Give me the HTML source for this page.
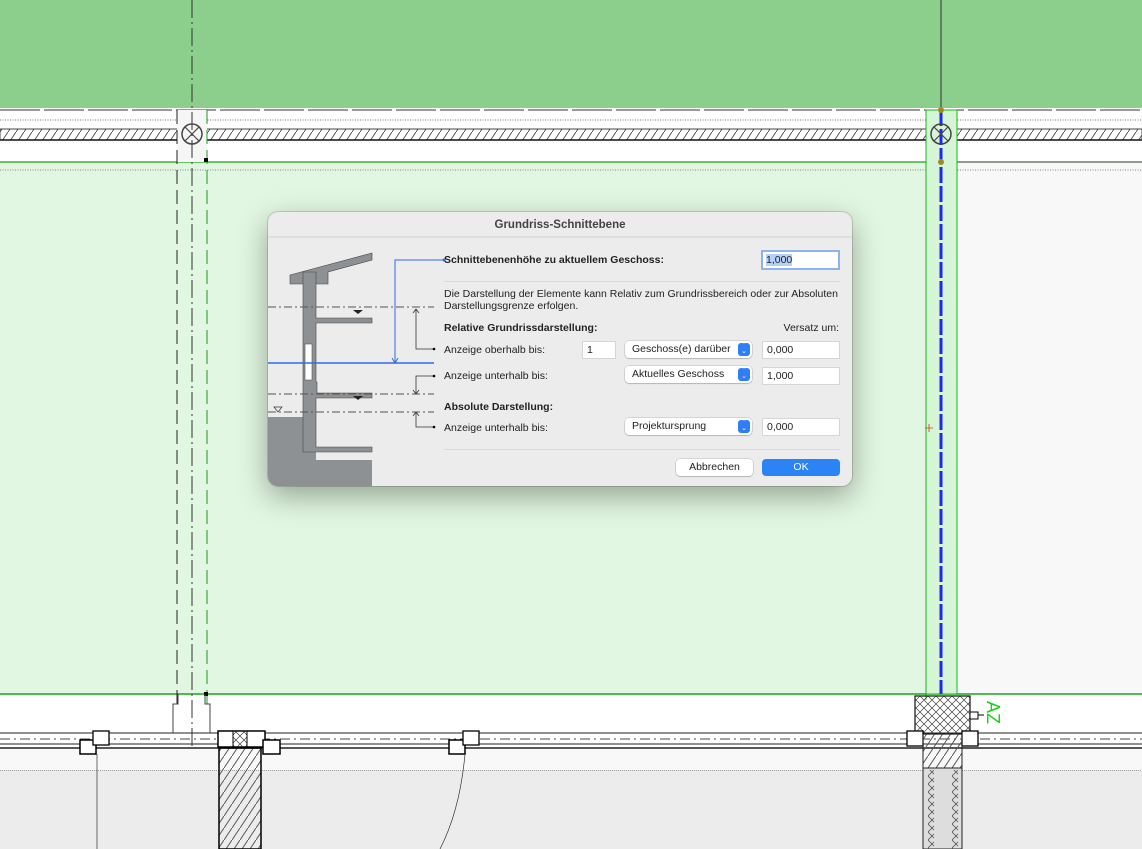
<!DOCTYPE html>
<html><head><meta charset="utf-8">
<style>
html,body{margin:0;padding:0;width:1142px;height:849px;overflow:hidden;background:#fff;font-family:"Liberation Sans",sans-serif;}
#bg{position:absolute;left:0;top:0}
.dlg{position:absolute;left:268px;top:212px;width:584px;height:274px;background:#ececec;border-radius:10px;box-shadow:0 10px 30px rgba(0,0,0,.35),0 0 0 1px rgba(0,0,0,.15);overflow:hidden;font-size:10.5px;color:#222}
.t{position:absolute;white-space:nowrap}
.title{left:0;width:584px;top:7px;text-align:center;font-weight:bold;font-size:11.5px;color:#444}
.b{font-weight:bold}
.inp{position:absolute;background:#fff;border:1px solid #d6d6d6;box-sizing:border-box;height:18px;padding:2px 0 0 4px;font-size:10.5px}
.pop{position:absolute;background:#fff;border-radius:4px;box-shadow:0 0 0 .5px rgba(0,0,0,.2),0 1px 1px rgba(0,0,0,.15);height:17px;box-sizing:border-box;padding:2px 0 0 7px;font-size:10.5px}
.pop i{position:absolute;right:2px;top:2px;width:12px;height:13px;background:#2f7ef5;border-radius:3px;color:#fff;font-style:normal;font-size:7px;line-height:6px;text-align:center}
.btn{position:absolute;height:17px;border-radius:4px;text-align:center;font-size:10.5px;line-height:17px}
.sep{position:absolute;height:1px;background:#d8d8d8}
</style></head><body>
<svg id="bg" width="1142" height="849" viewBox="0 0 1142 849">
<defs>
<pattern id="h" width="8" height="12" patternUnits="userSpaceOnUse"><path d="M0 12 L8 0" stroke="#555" stroke-width="1"/></pattern>
<pattern id="x" width="8" height="8" patternUnits="userSpaceOnUse"><path d="M0 8L8 0M0 0L8 8" stroke="#444" stroke-width=".7"/></pattern>
</defs>
<rect x="0" y="0" width="1142" height="108" fill="#8ccf8c"/>
<line x1="0" y1="110" x2="1142" y2="110" stroke="#333" stroke-dasharray="40 4"/>
<line x1="0" y1="120" x2="1142" y2="120" stroke="#777" stroke-dasharray="1 1.5"/>
<rect x="0" y="129" width="1142" height="11" fill="url(#h)" stroke="#444"/>
<line x1="0" y1="140" x2="1142" y2="140" stroke="#111" stroke-width="1.5"/>
<rect x="0" y="162" width="957" height="532" fill="#e1f7e1"/>
<rect x="957" y="162" width="185" height="532" fill="#f8f8f8"/>
<line x1="0" y1="162" x2="1142" y2="162" stroke="#1aa51a" stroke-width="1.3"/>
<line x1="957" y1="162" x2="1142" y2="162" stroke="#555"/>
<line x1="0" y1="170" x2="1142" y2="170" stroke="#888" stroke-dasharray="1 1.5"/>
<line x1="0" y1="694" x2="1142" y2="694" stroke="#1aa51a" stroke-width="1.5"/>
<!-- left column -->
<rect x="177" y="110" width="30" height="52" fill="#f6f6f6"/>
<line x1="177" y1="110" x2="177" y2="710" stroke="#222" stroke-dasharray="14 6"/>
<line x1="207" y1="110" x2="207" y2="710" stroke="#1a9a1a" stroke-dasharray="14 6"/>
<line x1="192" y1="0" x2="192" y2="849" stroke="#333" stroke-dasharray="18 4 2 4"/>
<circle cx="192" cy="134" r="10" fill="none" stroke="#444" stroke-width="1.5"/>
<path d="M185 127L199 141M199 127L185 141" stroke="#444" stroke-width="1.2"/>
<rect x="204" y="158" width="4" height="4" fill="#000"/><rect x="204" y="692" width="4" height="4" fill="#000"/>
<!-- right column -->
<rect x="926" y="110" width="31" height="584" fill="#d6f5d6" stroke="#1ab51a"/>
<line x1="926" y1="110" x2="926" y2="700" stroke="#1ab51a" stroke-dasharray="14 6"/>
<line x1="941" y1="0" x2="941" y2="110" stroke="#333"/>
<line x1="941" y1="110" x2="941" y2="694" stroke="#1a2aee" stroke-width="3" stroke-dasharray="16 3"/>
<circle cx="941" cy="134" r="10" fill="none" stroke="#444" stroke-width="1.5"/>
<path d="M934 127L948 141M948 127L934 141" stroke="#444" stroke-width="1.2"/>
<circle cx="941" cy="110" r="3" fill="#a08a20"/><circle cx="941" cy="162" r="3" fill="#a08a20"/>
<path d="M925 428h8M929 424v8" stroke="#d33" stroke-width=".8"/>
<!-- bottom -->
<rect x="0" y="770" width="1142" height="79" fill="#ececec"/>
<line x1="0" y1="770" x2="1142" y2="770" stroke="#555" stroke-dasharray="1 1"/>
<rect x="0" y="748" width="1142" height="22" fill="#f8f8f8"/>
<line x1="0" y1="733" x2="1142" y2="733" stroke="#222"/>
<line x1="0" y1="739" x2="1142" y2="739" stroke="#444" stroke-dasharray="10 4 2 4"/>
<line x1="0" y1="744" x2="1142" y2="744" stroke="#222"/>
<line x1="0" y1="748" x2="1142" y2="748" stroke="#222" stroke-width="1.5"/>
<path d="M173 733V704h5V694M210 733V704h-5V694" fill="none" stroke="#444"/>
<rect x="80" y="740" width="16" height="14" fill="#fff" stroke="#000" stroke-width="1.5"/>
<rect x="93" y="731" width="16" height="14" fill="#fff" stroke="#000" stroke-width="1.3"/>
<rect x="449" y="740" width="16" height="14" fill="#fff" stroke="#000" stroke-width="1.5"/>
<rect x="463" y="731" width="16" height="14" fill="#fff" stroke="#000" stroke-width="1.3"/>
<rect x="218" y="731" width="47" height="16" fill="#fff" stroke="#000" stroke-width="1.5"/>
<rect x="233" y="731" width="14" height="16" fill="url(#x)" stroke="#000"/>
<rect x="263" y="740" width="17" height="14" fill="#fff" stroke="#000" stroke-width="1.5"/>
<rect x="219" y="748" width="42" height="101" fill="url(#h)" stroke="#000" stroke-width="1.5"/>
<line x1="97" y1="754" x2="97" y2="849" stroke="#333" stroke-width=".7"/>
<path d="M465 754 Q460 810 440 849" fill="none" stroke="#333" stroke-width=".7"/>
<rect x="915" y="696" width="55" height="38" fill="url(#x)" stroke="#222" stroke-width="1.3"/>
<rect x="907" y="731" width="16" height="15" fill="#fff" stroke="#000" stroke-width="1.3"/>
<rect x="962" y="731" width="16" height="15" fill="#fff" stroke="#000" stroke-width="1.3"/>
<rect x="923" y="734" width="39" height="34" fill="url(#h)" stroke="#222"/>
<rect x="923" y="768" width="39" height="81" fill="#ddd" stroke="#222"/>
<rect x="928" y="770" width="6" height="79" fill="url(#x)"/><rect x="952" y="770" width="6" height="79" fill="url(#x)"/>
<rect x="970" y="712" width="8" height="7" fill="#fff" stroke="#000"/><line x1="978" y1="715" x2="984" y2="715" stroke="#000"/>
<text x="987" y="701" transform="rotate(90 987 701)" font-family="Liberation Sans" font-size="18" fill="#1ad01a">AZ</text>
</svg>

<div class="dlg">
<svg style="position:absolute;left:0;top:0" width="584" height="274">
<line x1="0" y1="25" x2="584" y2="25" stroke="#cfcfcf"/>
<!-- ground -->
<path d="M0 205H48V248H104V274H0Z" fill="#8e9194"/>
<path d="M22 63 L104 41 V48 L60 60 V72 H22Z" fill="#8e9194" stroke="#444" stroke-width=".6"/>
<path d="M35 60H48V106H104V111H48V170H49V181H104V186H48V235H104V240H35Z" fill="#8e9194" stroke="#444" stroke-width=".6"/>
<rect x="37" y="132" width="7" height="36" fill="#fff" stroke="#555" stroke-width=".6"/>
<g stroke="#555" stroke-dasharray="8 3 2 3" stroke-width=".9"><line x1="0" y1="95" x2="166" y2="95"/><line x1="0" y1="182" x2="166" y2="182"/><line x1="0" y1="200" x2="166" y2="200"/></g>
<path d="M90 102l5-4h-10z M90 188l5-4h-10z" fill="#222"/>
<path d="M6 195l4 5 4-5z" fill="none" stroke="#333" stroke-width=".7"/>
<line x1="0" y1="151" x2="166" y2="151" stroke="#2b6de8" stroke-width="1.5"/>
<path d="M176 48H127V151 M124 146l3 5 3-5" fill="none" stroke="#2b6de8"/>
<circle cx="176" cy="48" r="1.5" fill="#2b6de8"/>
<g fill="none" stroke="#333" stroke-width=".8"><path d="M148 97V137H166 M145 101l3-4 3 4"/><path d="M166 164H148V182 M145 178l3 4 3-4"/><path d="M148 200V215H166 M145 204l3-4 3 4"/></g>
<circle cx="166" cy="137" r="1.3"/><circle cx="166" cy="164" r="1.3"/><circle cx="166" cy="215" r="1.3"/>
</svg>
<div class="t title">Grundriss-Schnittebene</div>
<div class="t b" style="left:176px;top:42px">Schnittebenenhöhe zu aktuellem Geschoss:</div>
<div class="inp" style="left:493px;top:38px;width:79px;height:20px;border:2px solid #8eb4f0;padding:2px 0 0 3px"><span style="background:#b3d1fb">1,000</span></div>
<div class="sep" style="left:176px;top:69px;width:396px"></div>
<div class="t" style="left:176px;top:76px;line-height:12px">Die Darstellung der Elemente kann Relativ zum Grundrissbereich oder zur Absoluten<br>Darstellungsgrenze erfolgen.</div>
<div class="t b" style="left:176px;top:110px">Relative Grundrissdarstellung:</div>
<div class="t" style="right:13px;top:110px">Versatz um:</div>
<div class="t" style="left:176px;top:132px">Anzeige oberhalb bis:</div>
<div class="inp" style="left:314px;top:129px;width:34px">1</div>
<div class="pop" style="left:357px;top:129px;width:127px">Geschoss(e) darüber<i>⌃<br>⌄</i></div>
<div class="inp" style="left:494px;top:129px;width:78px">0,000</div>
<div class="t" style="left:176px;top:158px">Anzeige unterhalb bis:</div>
<div class="pop" style="left:357px;top:154px;width:127px">Aktuelles Geschoss<i>⌃<br>⌄</i></div>
<div class="inp" style="left:494px;top:155px;width:78px">1,000</div>
<div class="t b" style="left:176px;top:189px">Absolute Darstellung:</div>
<div class="t" style="left:176px;top:210px">Anzeige unterhalb bis:</div>
<div class="pop" style="left:357px;top:206px;width:127px">Projektursprung<i>⌃<br>⌄</i></div>
<div class="inp" style="left:494px;top:206px;width:78px">0,000</div>
<div class="sep" style="left:176px;top:237px;width:396px"></div>
<div class="btn" style="left:408px;top:247px;width:77px;background:#fff;box-shadow:0 0 0 .5px rgba(0,0,0,.2),0 1px 1px rgba(0,0,0,.15)">Abbrechen</div>
<div class="btn" style="left:494px;top:247px;width:78px;background:#2a84f6;color:#fff">OK</div>
</div>
</body></html>
